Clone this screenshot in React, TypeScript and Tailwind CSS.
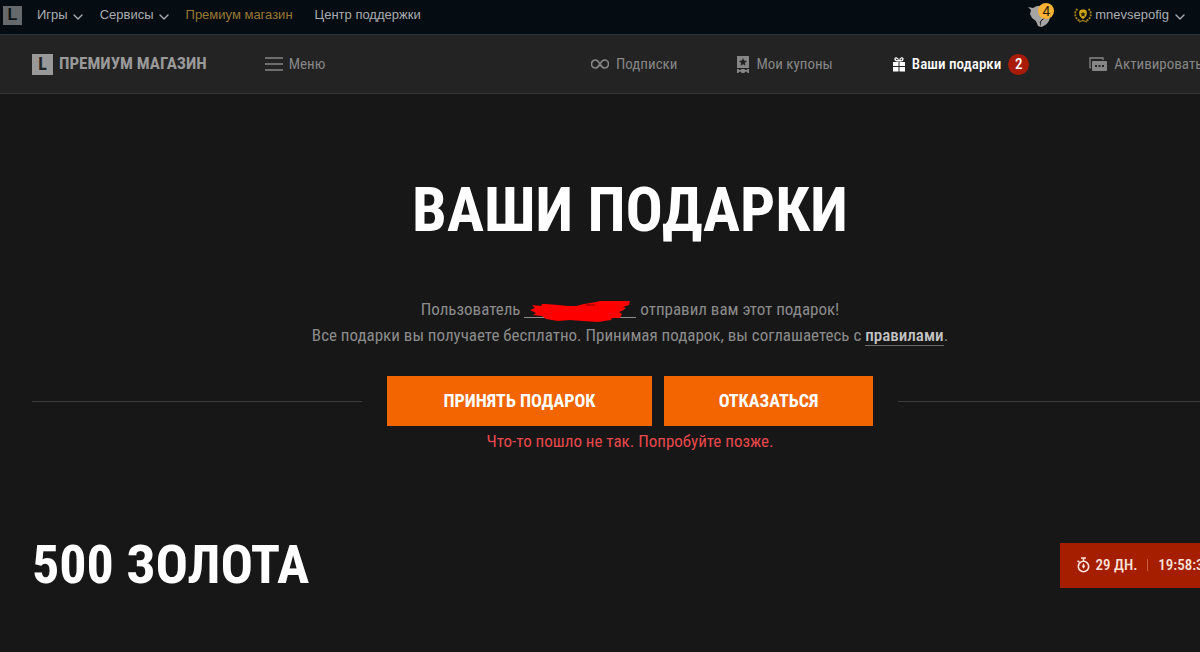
import { ChevronDown } from "lucide-react";

const FoxIcon = () => (
  <svg viewBox="0 0 26 24" className="h-6 w-[26px]" aria-hidden="true">
    <path
      d="M0 4l5 1 4-2h6l5 5 1 6-5 3-4 3 1 4-3-1-2-5-4-3-2-4 1-4z"
      fill="#a5a4a3"
    />
    <path d="M13 22c-1-4 2-6 4-6l5-2c0 4-4 9-9 10z" fill="#a5a4a3" />
    <path d="M12 20c1-3 3-4 5-5" stroke="#050c12" fill="none" />
  </svg>
);

const LaurelIcon = () => (
  <svg viewBox="0 0 18 16" className="h-4 w-[18px]" fill="none" aria-hidden="true">
    <path
      d="M3.500 2C0 5 0 11 6 14M14.500 2c3.500 3 3.500 9-2.500 12"
      stroke="#a5831a"
      strokeWidth="1.800"
      strokeDasharray="2 1"
    />
    <path d="M5 15l4-1.500 4 1.500" stroke="#a5831a" strokeWidth="1.200" />
    <path d="M5.500 4C6 2 12 2 12.500 4c1 3 0 6-3.500 8-3.500-2-4.500-5-3.500-8z" fill="#d3a716" />
    <path d="M9 4.500l.8 1.800 2 .2-1.500 1.300.4 2L9 8.800l-1.700 1 .4-2-1.500-1.300 2-.2z" fill="#2b2209" />
  </svg>
);

const InfinityIcon = () => (
  <svg viewBox="0 0 18 10" className="h-[10px] w-[18px]" fill="none" aria-hidden="true">
    <path
      d="M9 5C7.500 2.500 6.500 1 4.500 1a4 4 0 0 0 0 8C6.500 9 7.500 7.500 9 5s2.500-4 4.500-4a4 4 0 0 1 0 8C11.500 9 10.500 7.500 9 5z"
      stroke="currentColor"
      strokeWidth="1.700"
    />
  </svg>
);

const CouponIcon = () => (
  <svg viewBox="0 0 12 17" className="h-[17px] w-3" aria-hidden="true">
    <path
      fill="currentColor"
      fillRule="evenodd"
      d="M0 0h12v12H0zM6 2L4.900 4.600 2 5l2.100 1.900-.6 2.800L6 8.300l2.500 1.400-.6-2.800L10 5l-2.900-.4z"
    />
    <path
      fill="currentColor"
      d="M0 13h1.500a1.500 1 0 0 0 3 0h3a1.500 1 0 0 0 3 0H12v4h-1.500a1.500 1.500 0 0 0-3 0h-3a1.500 1.500 0 0 0-3 0H0z"
    />
  </svg>
);

const GiftIcon = () => (
  <svg viewBox="0 0 12 15" className="h-[15px] w-3" aria-hidden="true">
    <path
      d="M5.500 4C4 4 2 3.500 2 2s3-2 3.500 2zM6.500 4C8 4 10 3.500 10 2s-3-2-3.500 2z"
      fill="none"
      stroke="currentColor"
      strokeWidth="1.200"
    />
    <path d="M0 5h5.500v4H0zM6.500 5H12v4H6.500zM0 10h5.500v4.500H0zM6.500 10H12v4.500H6.500z" fill="currentColor" />
  </svg>
);

const CodeIcon = () => (
  <svg viewBox="0 0 18 14" className="h-[14px] w-[18px]" aria-hidden="true">
    <path d="M2 10.500H1V1h13v2" fill="none" stroke="currentColor" strokeWidth="1.300" />
    <rect x="3" y="4" width="15" height="10" rx="1" fill="currentColor" />
    <path d="M6 8h2v2H6zM9.500 8h2v2h-2zM13 8h2v2h-2z" fill="#232323" />
  </svg>
);

const StopwatchIcon = () => (
  <svg viewBox="0 0 13 16" className="h-4 w-[13px]" fill="none" aria-hidden="true">
    <circle cx="6.500" cy="9.500" r="5.200" stroke="currentColor" strokeWidth="1.600" />
    <path d="M4 1h5M6.500 1v3M.5 4l2 1" stroke="currentColor" strokeWidth="1.600" />
    <path d="M6.500 6L8 9.500l-1.500 2.300L5 9.500z" fill="currentColor" />
  </svg>
);

const Scribble = () => (
  <svg viewBox="0 0 102 22" className="absolute bottom-[-5px] left-[6px] h-[22px] w-[102px]" aria-hidden="true">
    <path
      d="M0 10l5-2-3-3 9 1 1-2 4 0 12 1 10 1 8 0 8-2 12-2 4-1h30l-1 4-6 2 3 1-4 3-3 1 3 2-2 4-8 0-1 2-13 2-16-1-12-1-12 1-12-2-4-3-9-1 3-2z"
      fill="#ff0000"
    />
    <path d="M56 5h9" stroke="#800000" />
  </svg>
);

const TopBar = () => {
  return (
    <div className="flex h-[35px] items-center border-b border-[#2d3236] bg-[#050c12] pl-[3px] pr-3 pb-1 font-['Liberation_Sans',sans-serif] text-[13px] text-[#a9adb0]">
      <a
        href="#"
        className="flex size-[19px] items-center justify-center bg-[#65696b] text-base leading-none font-bold text-[#0d1418]"
      >
        L
      </a>
      <nav className="ml-[15px] flex items-center">
        <button className="flex items-center gap-[2px]">
          Игры
          <ChevronDown className="mt-1 size-4" />
        </button>
        <button className="ml-[14px] flex items-center gap-[2px]">
          Сервисы
          <ChevronDown className="mt-1 size-4" />
        </button>
        <a href="#" className="ml-[14px] text-[#9a7835]">
          Премиум магазин
        </a>
        <a href="#" className="ml-[22px]">
          Центр поддержки
        </a>
      </nav>
      <div className="ml-auto flex items-center">
        <button className="relative mr-5 w-[26px]" aria-label="Уведомления">
          <FoxIcon />
          <span className="absolute top-0 right-0 flex size-4 items-center justify-center rounded-full bg-[#f9b233] text-sm leading-none text-[#231a08]">
            4
          </span>
        </button>
        <button className="flex items-center gap-[3px]">
          <LaurelIcon />
          mnevsepofig
          <ChevronDown className="mt-1 size-4" />
        </button>
      </div>
    </div>
  );
};

const Header = () => {
  return (
    <header className="flex h-[59px] items-center border-b border-[#343434] bg-[#232323] pr-8 pl-8 text-[15px] whitespace-nowrap text-[#868686]">
      <a href="#" className="flex items-center gap-[6px] text-[17px] font-bold text-[#999]">
        <span className="flex size-[21px] items-center justify-center bg-[#999] text-lg leading-none text-[#232323]">
          L
        </span>
        ПРЕМИУМ МАГАЗИН
      </a>
      <button className="ml-[58px] flex items-center gap-[6px]">
        <svg viewBox="0 0 18 14" className="h-[14px] w-[18px]" aria-hidden="true">
          <path d="M0 1h18M0 7h18M0 13h18" stroke="currentColor" strokeWidth="1.500" />
        </svg>
        Меню
      </button>
      <nav className="ml-auto flex items-center gap-[60px]">
        <a href="#" className="flex items-center gap-[7px]">
          <InfinityIcon />
          Подписки
        </a>
        <a href="#" className="flex items-center gap-[7px]">
          <CouponIcon />
          Мои купоны
        </a>
        <a href="#" className="flex items-center gap-[7px] font-medium text-white">
          <GiftIcon />
          Ваши подарки
          <span className="flex size-[21px] items-center justify-center rounded-full bg-[#a81c07]">
            2
          </span>
        </a>
        <a href="#" className="flex items-center gap-[7px]">
          <CodeIcon />
          Активировать код
        </a>
      </nav>
    </header>
  );
};

export default function App() {
  return (
    <div className="min-h-screen overflow-hidden bg-[#171717] font-['Roboto_Condensed','Liberation_Sans_Narrow',Roboto,sans-serif]">
      <TopBar />
      <div className="w-[105%]">
        <Header />
        <main className="pt-20">
          <h1 className="text-center text-[62px] leading-[72px] font-bold text-white">
            ВАШИ ПОДАРКИ
          </h1>
          <div className="mt-[50px] text-center text-[17px] leading-[26px] text-[#8b8b8b]">
            <p>
              Пользователь{" "}
              <span className="relative inline-block h-[14px] w-[112px] border-b border-[#8b8b8b] align-middle">
                <Scribble />
              </span>{" "}
              отправил вам этот подарок!
            </p>
            <p>
              Все подарки вы получаете бесплатно. Принимая подарок, вы соглашаетесь с{" "}
              <a href="#" className="border-b border-[#6a6a6a] font-medium text-[#c4c4c4]">
                правилами
              </a>
              .
            </p>
          </div>
          <div className="mt-7 flex items-center gap-[25px] px-8">
            <div className="h-px flex-1 bg-[#3c3c3c]" />
            <div className="flex gap-3 text-lg font-bold text-white">
              <button className="h-[50px] w-[265px] bg-[#f26500]">ПРИНЯТЬ ПОДАРОК</button>
              <button className="h-[50px] w-[209px] bg-[#f26500]">ОТКАЗАТЬСЯ</button>
            </div>
            <div className="h-px flex-1 bg-[#3c3c3c]" />
          </div>
          <p role="alert" className="mt-[2px] text-center text-[17px] leading-[26px] text-[#e8484c]">
            Что-то пошло не так. Попробуйте позже.
          </p>
          <section className="mt-[79px] flex items-center justify-between pr-8 pl-8">
            <h2 className="text-[54px] leading-[64px] font-bold text-white">500 ЗОЛОТА</h2>
            <div className="flex h-[45px] items-center bg-[#a51e00] px-[17px] text-[15px] font-medium text-[#fbe3dc]">
              <StopwatchIcon />
              <span className="ml-[6px]">29 ДН.</span>
              <span className="mx-[10px] h-3 w-px bg-[#cb5a43]" />
              <span>19:58:35</span>
            </div>
          </section>
        </main>
      </div>
    </div>
  );
}
